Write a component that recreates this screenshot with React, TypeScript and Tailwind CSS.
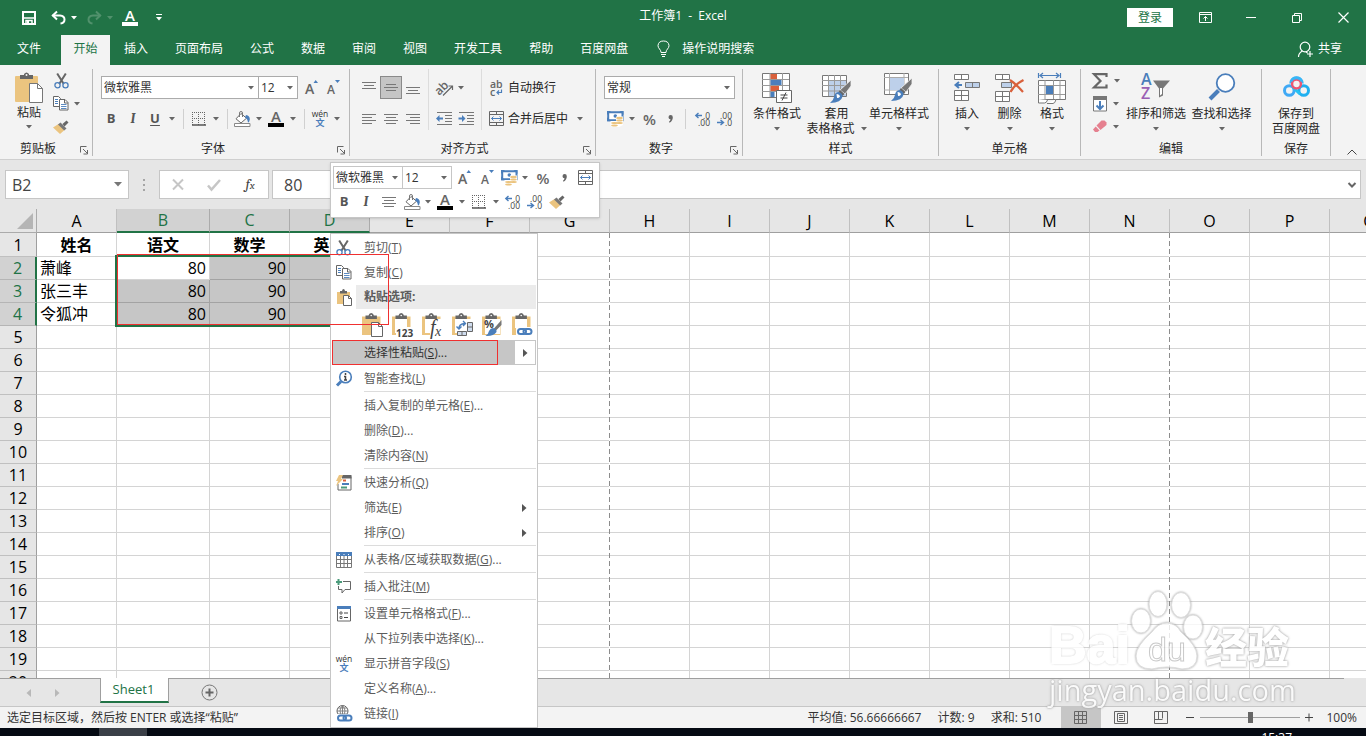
import React from "react";

type Kids = { children?: React.ReactNode };

/* ---------- small drawing helpers ---------- */

function Pic({ w, h, children }: { w: number; h: number } & Kids) {
  return (
    <svg width={w} height={h} viewBox={`0 0 ${w} ${h}`} fill="none" className="block shrink-0 overflow-visible" aria-hidden="true">
      {children}
    </svg>
  );
}

function Caret({ color = "#666" }: { color?: string }) {
  return (
    <Pic w={6} h={4}>
      <path d="M0 0h6L3 3.5z" fill={color} />
    </Pic>
  );
}

const Scissors = () => (
  <Pic w={15} h={16}>
    <path d="M3.2 0.5 9.8 11M11.8 0.5 5.2 11" stroke="#666" strokeWidth="2" />
    <circle cx="3.5" cy="12.2" r="2.6" stroke="#4a7ebb" strokeWidth="1.3" />
    <circle cx="11.5" cy="12.2" r="2.6" stroke="#4a7ebb" strokeWidth="1.3" />
  </Pic>
);

const Copy = () => (
  <Pic w={16} h={15}>
    <path d="M.5.5h5l2 2v8h-7z" fill="#fff" stroke="#666" />
    <path d="M2 3.5h3M2 5.5h3M2 7.5h3" stroke="#4a7ebb" />
    <path d="M6.500 3.500h5.500l3 3v7.500h-8.500z" fill="#fff" stroke="#666" />
    <path d="M11.500 3.500v3.500h3.500" stroke="#666" />
    <path d="M8 8.500h5.500M8 10.500h5.500M8 12.500h5.500" stroke="#4a7ebb" strokeWidth=".9" />
  </Pic>
);

const Brush = () => (
  <Pic w={16} h={14}>
    <path d="M0 7.500 5.500 4l6 6L7 14z" fill="#ebc47f" />
    <path d="M5 4.500 7.500 2.500l6 6-2.300 2z" fill="#777" />
    <path d="M9.500 4 13.500.500l2 2-4 4z" fill="#666" />
  </Pic>
);

const PasteBig = () => (
  <Pic w={30} h={31}>
    <rect x="1" y="4" width="23" height="26" rx="1" fill="#ebc47f" />
    <path d="M6 3h4V2q2.500-3 5 0v1h4v4H6z" fill="#666" />
    <circle cx="12.500" cy="3" r="1" fill="#f3f3f3" />
    <path d="M15.500 11.500h8l5 5v14h-13z" fill="#fff" stroke="#777" />
    <path d="M23.500 11.500v5h5" stroke="#777" />
  </Pic>
);

function Clip({ children }: Kids) {
  return (
    <Pic w={23} h={24}>
      <path d="M1 3.500h18.500V22H1z" fill="#ebc47f" />
      <path d="M4.500 2.500h3q.500-2.500 2.700-2.500t2.700 2.500h3V6H4.500z" fill="#666" />
      <circle cx="10.200" cy="2.500" r=".8" fill="#fff" />
      {children}
    </Pic>
  );
}

const PasteSmall = () => (
  <Pic w={16} h={17}>
    <path d="M1 3h13v12H1z" fill="#ebc47f" />
    <path d="M4 2h2q.300-2 1.500-2t1.500 2h2v2.500H4z" fill="#666" />
    <path d="M7.500 6.500h5l3 3v7h-8z" fill="#fff" stroke="#666" />
    <path d="M12.500 6.500v3h3" stroke="#666" />
  </Pic>
);

const GrowA = () => (
  <Pic w={13} h={15}>
    <text x="0" y="14" fontSize="14" fontWeight="600" fontFamily="Open Sans" fill="#666">A</text>
    <path d="M8.500 3h4.500L10.700 0z" fill="#4a7ebb" />
  </Pic>
);

const ShrinkA = () => (
  <Pic w={13} h={15}>
    <text x="0" y="14" fontSize="12" fontWeight="600" fontFamily="Open Sans" fill="#666">A</text>
    <path d="M8 0h5L10.500 3z" fill="#4a7ebb" />
  </Pic>
);

const BordersIcon = () => (
  <Pic w={14} h={14}>
    <path d="M0 .500h14M0 6.500h14M.500 0v13M6.500 0v13M12.500 0v13" stroke="#666" strokeDasharray="1 1" />
    <path d="M0 13h14" stroke="#555" strokeWidth="1.500" />
  </Pic>
);

const Bucket = () => (
  <Pic w={17} h={16}>
    <path d="M7 2.500 2 7.800 7 12l5.500-4.800z" fill="#fff" stroke="#666" />
    <path d="M5.500 6V2q0-1.500 1.500-1.500T8.500 2v4" stroke="#777" />
    <path d="M12 4q4 .500 3.800 4.500-.300 2.500-1.800 3-.500-4-3-5z" fill="#4a7ebb" />
    <path d="M.500 12.500h15.500v3H.500z" fill="#fff" stroke="#888" />
  </Pic>
);

const FontColor = ({ fg = "#666", bar = "#000" }: { fg?: string; bar?: string }) => (
  <Pic w={16} h={16}>
    <text x="8" y="11" textAnchor="middle" fontSize="15" fontWeight="600" fontFamily="Open Sans" fill={fg}>A</text>
    <path d="M0 12h16v4H0z" fill={bar} />
  </Pic>
);

const Pinyin = () => (
  <Pic w={16} h={17}>
    <text x="8" y="6.500" textAnchor="middle" fontSize="8.500" fontFamily="Open Sans" fill="#333">wén</text>
    <text x="8" y="16" textAnchor="middle" fontSize="9" fontWeight="700" fontFamily="Noto Sans CJK SC" fill="#4a7ebb">文</text>
  </Pic>
);

function Lines({ d }: { d: string }) {
  return (
    <Pic w={14} h={12}>
      <path d={d} stroke="#777" />
    </Pic>
  );
}
const alignTop = "M0 .500h14M2 3.500h10M0 6.500h14";
const alignMid = "M2 2.500h10M0 5.500h14M2 8.500h10";
const alignBottom = "M0 5.500h14M2 8.500h10M0 11.500h14";
const alignLeft = "M0 1.500h14M0 4.500h10M0 7.500h14M0 10.500h10";
const alignCenter = "M0 1.500h14M2 4.500h10M0 7.500h14M2 10.500h10";
const alignRight = "M0 1.500h14M4 4.500h10M0 7.500h14M4 10.500h10";

const Orient = () => (
  <Pic w={18} h={16}>
    <text x="-1" y="12" fontSize="12" fontWeight="600" fontFamily="Open Sans" fill="#666" transform="rotate(-45 6 9)">ab</text>
    <path d="M7 15.500 16 6.500M12.500 6h4v4" stroke="#666" strokeWidth="1.200" />
  </Pic>
);

const Indent = ({ out }: { out?: boolean }) => (
  <Pic w={17} h={13}>
    <path d="M1 .500h15M9 3.500h7M9 6.500h7M9 9.500h7M1 12.500h15" stroke="#777" />
    {out ? (
      <path d="M0 6.500 3.500 3v2.500H7v2H3.500V10z" fill="#4a7ebb" />
    ) : (
      <path d="M7.500 6.500 4 3v2.500H.500v2H4V10z" fill="#4a7ebb" />
    )}
  </Pic>
);

const Wrap = () => (
  <Pic w={13} h={16}>
    <text x="0" y="8" fontSize="10.500" fontWeight="600" fontFamily="Open Sans" fill="#666">ab</text>
    <text x="0" y="15.500" fontSize="10.500" fontWeight="600" fontFamily="Open Sans" fill="#666">c</text>
    <path d="M11.500 9.500v3H7M9 10.500l-2 2 2 2" stroke="#4a7ebb" strokeWidth="1.200" />
  </Pic>
);

const Merge = () => (
  <Pic w={16} h={15}>
    <path d="M.500.500h14v14H.500zM0 3.500h15M0 11.500h15M7.500 0v3.500M7.500 11.500v3" stroke="#666" />
    <path d="M2.500 7.500h10M4.500 5.500l-2 2 2 2M10.500 5.500l2 2-2 2" stroke="#4a7ebb" />
  </Pic>
);

const Currency = () => (
  <Pic w={17} h={16}>
    <path d="M1.200 1.200h14.300v8H1.200z" fill="#fff" stroke="#4a7ebb" strokeWidth="2" />
    <path d="M0 0h4L0 4zM16.500 0h-4l4 4zM0 10.200h4l-4-4z" fill="#4a7ebb" />
    <circle cx="8.300" cy="5" r="1.800" fill="#4a7ebb" />
    <path d="M9 5.500h7V14l-4 2H5l-1.500-1.500V10H9z" fill="#fff" />
    <ellipse cx="12.500" cy="7" rx="3.300" ry="1.300" fill="#ebc47f" />
    <ellipse cx="12.500" cy="9.500" rx="3.300" ry="1.100" fill="#ebc47f" />
    <ellipse cx="12.500" cy="12" rx="3.300" ry="1.100" fill="#ebc47f" />
    <ellipse cx="7.500" cy="12" rx="3.300" ry="1.100" fill="#ebc47f" />
    <ellipse cx="7.500" cy="14.500" rx="3.300" ry="1.100" fill="#ebc47f" />
  </Pic>
);

const CommaIcon = () => (
  <Pic w={6} h={8}>
    <path d="M.500 2.200a2.100 2.100 0 1 1 4.300 0Q5 5.500 1.500 7.800l-.500-1Q2.500 5.500 2.500 4.300.500 4.200.500 2.200z" fill="#666" />
  </Pic>
);

const Decimals = ({ less }: { less?: boolean }) => (
  <Pic w={15} h={14}>
    <text x="15" y="6.500" textAnchor="end" fontSize="8.500" fontFamily="Open Sans" fill="#444">{less ? ".00" : ".0"}</text>
    <text x="15" y="13.500" textAnchor="end" fontSize="8.500" fontFamily="Open Sans" fill="#444">{less ? ".0" : ".00"}</text>
    {less ? (
      <path d="M0 10.500h6M3.500 8l3 2.500-3 2.500" stroke="#4a7ebb" strokeWidth="1.400" />
    ) : (
      <path d="M7 3.500H1M3.500 1 .800 3.500 3.500 6" stroke="#4a7ebb" strokeWidth="1.400" />
    )}
  </Pic>
);

const Launcher = () => (
  <Pic w={9} h={9}>
    <path d="M.500 6.500v-6h6M3 3l4.500 4.500M7.500 4v4H3.500" stroke="#666" />
  </Pic>
);

const PaintTip = () => (
  <g>
    <path d="M28 5v6l-6 8-5-4z" fill="#777" stroke="#f3f3f3" strokeWidth=".8" />
    <path d="M17 15l4.500 4-2 2-4-4z" fill="#666" />
    <path d="M15.500 17q4 1 4 4.500-1 6-12.500 6.500 3.500-2.500 4-6 .500-4.500 4.500-5z" fill="#4a7ebb" />
    <path d="M13.500 19q3 0 3.500 2.500-1.500 2-3 1.500z" fill="#fff" />
  </g>
);

const CondFormat = () => (
  <Pic w={31} h={31}>
    <path d="M.500.500h27v24H.500z" fill="#fff" stroke="#777" />
    <path d="M8 0v24M20.500 0v24M0 6.500h27M0 12.500h27M0 18.500h27" stroke="#999" />
    <path d="M8.500 1H15v5H8.500zM8.500 13H17v5H8.500z" fill="#d9603b" />
    <path d="M8.500 7h11v5h-11zM8.500 19h4v5h-4z" fill="#4a7ebb" />
    <path d="M14.500 17.500h15v12h-15z" fill="#fff" stroke="#666" />
    <path d="M18.500 22h7M18.500 25h7M24 19.500l-4 8" stroke="#444" />
  </Pic>
);

const TableStyle = () => (
  <Pic w={30} h={31}>
    <path d="M.500 2.500h24v21H.500z" fill="#fff" stroke="#777" />
    <path d="M7 8h17v15H7z" fill="#bdd0ea" />
    <path d="M6.500 2v21M12.500 2v21M18.500 2v21M0 7.500h24M0 12.500h24M0 18h24" stroke="#999" />
    <g transform="translate(1 2)">
      <PaintTip />
    </g>
  </Pic>
);

const CellStyle = () => (
  <Pic w={30} h={31}>
    <path d="M.500.500h24v21H.500z" fill="#fff" stroke="#777" />
    <path d="M0 4.500h24M0 17h24M5.500 0v21M20 0v21" stroke="#aaa" />
    <path d="M6 5h14v12H6z" fill="#bdd0ea" />
    <PaintTip />
  </Pic>
);

const InsertCells = () => (
  <Pic w={27} h={30}>
    <path d="M.500 1.500h14v5H.500zM7.500 1.500v5M.500 17.500h14v10H.500zM7.500 17.500v10M.500 22.500h14" fill="#fff" stroke="#777" />
    <path d="M11.500 9.500h14v5h-14zM18.500 9.500v5" fill="#bdd0ea" stroke="#777" />
    <path d="M8 12H2M5 9l-3.500 3L5 15" stroke="#4a7ebb" strokeWidth="2" />
  </Pic>
);

const DeleteCells = () => (
  <Pic w={30} h={30}>
    <path d="M.500 1.500h14v5H.500zM7.500 1.500v5M.500 18.500h14v10H.500zM7.500 18.500v10M.500 23.500h14" fill="#fff" stroke="#777" />
    <path d="M6.500 9.500h10v5h-10z" fill="#bdd0ea" stroke="#777" />
    <path d="M15 7q6 4 13 12M28.500 7Q19 12 15.500 19" stroke="#d9603b" strokeWidth="2.200" />
  </Pic>
);

const FormatCells = () => (
  <Pic w={29} h={32}>
    <path d="M.500 0v5M22.500 0v5M2 2.500h19M5 0 2 2.500 5 5M18 0l3 2.500L18 5" stroke="#4a7ebb" strokeWidth="1.200" />
    <path d="M.500 7.500h27v19H.500z" fill="#fff" stroke="#777" />
    <path d="M7 7v19M15.500 7v19M22 7v19M0 12.500h27M0 21.500h27" stroke="#999" />
    <path d="M8 13h7v8H8z" fill="#4a7ebb" />
    <path d="M.500 26v4h6q2 0 3-3M9 30.500h6q2 0 3-4" fill="#fff" stroke="#777" />
  </Pic>
);

const Sigma = () => (
  <Pic w={16} h={16}>
    <path d="M14.500 4V1.200H2L8.500 8 2 14.500h12.500V11.500" stroke="#666" strokeWidth="2.200" />
  </Pic>
);

const FillDown = () => (
  <Pic w={14} h={16}>
    <path d="M.500 1v14h13V1" fill="#fff" stroke="#777" />
    <path d="M0 0h14v4H0z" fill="#777" />
    <path d="M7 5v8M3.500 9.500 7 13l3.500-3.500" stroke="#4a7ebb" strokeWidth="2" />
  </Pic>
);

const Eraser = () => (
  <Pic w={14} h={13}>
    <path d="M8.500.500h3l2 2v2.500L7.500 10 3.500 5.500z" fill="#e5808f" />
    <path d="M2.700 6.500 6.500 10.500 4.500 12H2L0 9.500z" fill="#e5808f" />
  </Pic>
);

const SortFilter = () => (
  <Pic w={30} h={28}>
    <text x="0" y="12" fontSize="16" fontWeight="600" fontFamily="Open Sans" fill="#4a7ebb">A</text>
    <text x="0" y="26" fontSize="16" fontWeight="600" fontFamily="Open Sans" fill="#9a5fb4">Z</text>
    <path d="M12 7.500h17l-7 8v7l-4 2v-9z" fill="#777" />
    <path d="M19 15h2v6l-2 1.500z" fill="#fff" />
  </Pic>
);

const FindIcon = () => (
  <Pic w={28} h={28}>
    <path d="M2 26 10.500 17.500" stroke="#4a7ebb" strokeWidth="4" />
    <circle cx="17.500" cy="10" r="8.800" fill="#fff" stroke="#4a7ebb" strokeWidth="1.800" />
  </Pic>
);

const NetDisk = () => (
  <Pic w={27} h={22}>
    <circle cx="6.300" cy="14.500" r="4.800" stroke="#3fa9f5" strokeWidth="3" />
    <circle cx="20.700" cy="14.500" r="4.800" stroke="#1fb0f0" strokeWidth="3" />
    <path d="M10 11.500l7 6.500" stroke="#27c1f2" strokeWidth="3" />
    <path d="M7.800 7.500a5.700 5.700 0 0 1 11.400 0" stroke="#38b6f7" strokeWidth="3" />
    <circle cx="13.500" cy="8" r="4.400" stroke="#f0566f" strokeWidth="2.400" />
    <path d="M8 5.500a6 6 0 0 1 11 0" stroke="#38b6f7" strokeWidth="2.600" />
  </Pic>
);

/* ---------- controls ---------- */

function Tool({ w, label, children, on }: { w: string; label: string; on?: boolean } & Kids) {
  return (
    <button
      aria-label={label}
      className={`${w} flex h-[23px] shrink-0 items-center justify-center ${on ? "border border-[#8a8a8a] bg-[#c5c5c5]" : ""}`}
    >
      {children}
    </button>
  );
}

const Rule = ({ m }: { m: string }) => <span className={`${m} h-5 w-px shrink-0 bg-[#d0d0d0]`} />;

function Combo({ label, value, w, border }: { label: string; value: string; w: string; border: string }) {
  return (
    <label className={`${w} ${border} relative block h-[23px] shrink-0 border bg-white`}>
      <span className="sr-only">{label}</span>
      <select defaultValue={value} className="block h-[21px] w-full appearance-none bg-transparent pl-[2px] text-xs leading-normal text-[#333] outline-none">
        <option>{value}</option>
      </select>
      <span className="pointer-events-none absolute top-[9px] right-1">
        <Caret />
      </span>
    </label>
  );
}

function Group({ w, name, launcher, children }: { w: string; name: string; launcher?: boolean } & Kids) {
  return (
    <section className={`${w} flex h-[87px] shrink-0 flex-col border-r border-[#b8b8b8]`} aria-label={name}>
      <div className="flex-1">{children}</div>
      <div className="flex h-[15px] items-center leading-4">
        <span className="flex-1 text-center">{name}</span>
        {launcher && (
          <span className="w-4 pt-1 pl-1">
            <Launcher />
          </span>
        )}
      </div>
    </section>
  );
}

function Big({ w, icon, lines, arrow }: { w: string; icon: React.ReactNode; lines: string[]; arrow?: boolean }) {
  return (
    <button className={`${w} flex shrink-0 flex-col items-center pt-1`}>
      <span className="flex h-8 items-start justify-center">{icon}</span>
      <span className="leading-[17px] whitespace-nowrap">{lines[0]}</span>
      <span className="flex h-[14px] items-center gap-1.5 whitespace-nowrap leading-[14px]">
        {lines[1] && <span>{lines[1]}</span>}
        {arrow && <Caret />}
      </span>
    </button>
  );
}

function Quick({ w, label, children }: { w: string; label: string } & Kids) {
  return (
    <button aria-label={label} className={`${w} flex h-full shrink-0 items-center justify-center`}>
      {children}
    </button>
  );
}

/* ---------- title bar and tabs ---------- */

function TitleBar() {
  return (
    <header className="grid h-[35px] shrink-0 grid-cols-[1fr_auto_1fr] items-center text-white">
      <div className="flex h-8 items-center pl-[22px]">
        <Quick w="w-[14px]" label="保存">
          <Pic w={14} h={14}>
            <path d="M1 1h12v12H1z" stroke="#fff" strokeWidth="2" />
            <path d="M2 7h10M4 9.500h6V13H4z" stroke="#fff" strokeWidth="1.500" />
            <path d="M5 10h2v3H5z" fill="#fff" />
          </Pic>
        </Quick>
        <Quick w="ml-[15px] mr-[5px] w-[15px]" label="撤消">
          <Pic w={15} h={13}>
            <path d="M1.500 4.500H9q4.500.500 4.500 4t-4 4" stroke="#fff" strokeWidth="2" />
            <path d="M6 .500 1.800 4.500 6 8.500" stroke="#fff" strokeWidth="2" />
          </Pic>
        </Quick>
        <Caret color="#fff" />
        <Quick w="ml-[10px] mr-[5px] w-[15px]" label="恢复">
          <Pic w={15} h={13}>
            <path d="M13.500 4.500H6Q1.500 5 1.500 8.500t4 4" stroke="#51916c" strokeWidth="2" />
            <path d="M9 .500 13.200 4.500 9 8.500" stroke="#51916c" strokeWidth="2" />
          </Pic>
        </Quick>
        <Caret color="#51916c" />
        <Quick w="mx-[9px] w-4" label="字体颜色">
          <FontColor fg="#fff" bar="#fff" />
        </Quick>
        <Quick w="w-6" label="自定义快速访问工具栏">
          <Pic w={6} h={7}>
            <path d="M0 .500h6" stroke="#fff" />
            <path d="M0 3h6L3 6.500z" fill="#fff" />
          </Pic>
        </Quick>
      </div>
      <h1 className="pb-1 whitespace-pre leading-5">{"工作簿1  -  Excel"}</h1>
      <div className="flex h-8 items-center justify-end">
        <button className="mr-[9px] h-[19px] w-[46px] bg-white text-[#217346]">登录</button>
        <Quick w="w-[46px]" label="功能区显示选项">
          <Pic w={13} h={11}>
            <path d="M.500.500h12v10H.500zM0 2.500h13M6.500 9V4.500M4.500 6.500l2-2 2 2" stroke="#fff" />
          </Pic>
        </Quick>
        <Quick w="w-[46px]" label="最小化">
          <span className="h-px w-[10px] bg-white" />
        </Quick>
        <Quick w="w-[46px]" label="向下还原">
          <Pic w={10} h={10}>
            <path d="M.500 2.500h7v7h-7zM2.500 2.500v-2h7v7h-2" stroke="#fff" />
          </Pic>
        </Quick>
        <Quick w="w-[46px]" label="关闭">
          <Pic w={11} h={11}>
            <path d="M.500.500l10 10M10.500.500l-10 10" stroke="#fff" strokeWidth="1.200" />
          </Pic>
        </Quick>
      </div>
    </header>
  );
}

const tabs = ["插入", "页面布局", "公式", "数据", "审阅", "视图", "开发工具", "帮助", "百度网盘"];

function Tabs() {
  return (
    <nav className="flex h-[30px] shrink-0 items-stretch gap-px pb-0.5 text-white">
      <button className="mr-[6px] ml-1 px-[13px]">文件</button>
      <button className="-mb-0.5 w-[49px] bg-[#f3f3f3] pb-0.5 text-[#217346]">开始</button>
      {tabs.map((t) => (
        <button key={t} className="px-[13px]">
          {t}
        </button>
      ))}
      <button className="flex items-center gap-3 px-[15px]">
        <Pic w={13} h={18}>
          <path d="M4 12.500q0-2-1.500-3.500Q1 7.500 1 5.500 1.500 1 6.500 1T12 5.500q0 2-1.500 3.500T9 12.500zM4 14.500h5M5 16.500h3" stroke="#fff" />
        </Pic>
        操作说明搜索
      </button>
      <button className="mr-6 ml-auto flex items-center gap-1">
        <Pic w={16} h={17}>
          <circle cx="7" cy="6" r="4.800" stroke="#fff" strokeWidth="1.200" />
          <path d="M.500 16q0-4 4-6M8 11l1.500 1M12 10v6M9 13h6" stroke="#fff" strokeWidth="1.200" />
        </Pic>
        共享
      </button>
    </nav>
  );
}

/* ---------- ribbon ---------- */

function Ribbon() {
  return (
    <div className="flex h-[95px] shrink-0 border-b border-[#cfcfcf] bg-[#f3f3f3] pt-1 text-[#262626]">
      <Group w="w-[93px]" name="剪贴板" launcher>
        <div className="flex pl-[15px]">
          <button className="flex w-7 flex-col items-center pt-[3px]">
            <PasteBig />
            <span className="pt-px leading-[17px]">粘贴</span>
            <span className="flex h-3 items-center">
              <Caret />
            </span>
          </button>
          <div className="flex flex-col pl-[9px]">
            <Tool w="w-[18px]" label="剪切">
              <Scissors />
            </Tool>
            <div className="flex items-center gap-1">
              <Tool w="w-[18px]" label="复制">
                <Copy />
              </Tool>
              <Caret />
            </div>
            <Tool w="w-[18px]" label="格式刷">
              <Brush />
            </Tool>
          </div>
        </div>
      </Group>

      <Group w="w-[257px]" name="字体" launcher>
        <div className="flex pt-[7px] pl-2">
          <Combo label="字体" value="微软雅黑" w="w-[158px]" border="border-[#ababab]" />
          <Combo label="字号" value="12" w="-ml-px w-[40px]" border="border-[#ababab]" />
          <Tool w="ml-0.5 w-[22px]" label="增大字号">
            <GrowA />
          </Tool>
          <Tool w="w-[22px]" label="减小字号">
            <ShrinkA />
          </Tool>
        </div>
        <div className="flex items-center pt-2 pl-[7px]">
          <Tool w="w-[22px]" label="加粗">
            <b className="text-[13px] text-[#555]">B</b>
          </Tool>
          <Tool w="w-[22px]" label="倾斜">
            <i className="font-serif text-sm font-bold text-[#555]">I</i>
          </Tool>
          <Tool w="w-[22px]" label="下划线">
            <b className="text-[13px] text-[#555] underline underline-offset-2">U</b>
          </Tool>
          <Tool w="w-3" label="下划线选项">
            <Caret />
          </Tool>
          <Rule m="mx-[5px]" />
          <Tool w="w-5" label="边框">
            <BordersIcon />
          </Tool>
          <Tool w="w-[14px]" label="边框选项">
            <Caret />
          </Tool>
          <Rule m="mx-1" />
          <Tool w="w-5" label="填充颜色">
            <Bucket />
          </Tool>
          <Tool w="w-[14px]" label="填充选项">
            <Caret />
          </Tool>
          <Tool w="w-5" label="字体颜色">
            <FontColor />
          </Tool>
          <Tool w="w-[14px]" label="颜色选项">
            <Caret />
          </Tool>
          <Rule m="mx-1" />
          <Tool w="w-[22px]" label="拼音">
            <Pinyin />
          </Tool>
          <Tool w="w-3" label="拼音选项">
            <Caret />
          </Tool>
        </div>
      </Group>

      <Group w="w-[246px]" name="对齐方式" launcher>
        <div className="flex pl-2">
          <div className="w-[70px] pt-[7px]">
            <div className="flex h-[23px]">
              <Tool w="w-[22px]" label="顶端对齐">
                <Lines d={alignTop} />
              </Tool>
              <Tool w="w-[22px]" label="垂直居中" on>
                <Lines d={alignMid} />
              </Tool>
              <Tool w="w-[22px]" label="底端对齐">
                <Lines d={alignBottom} />
              </Tool>
            </div>
            <div className="flex pt-2">
              <Tool w="w-[22px]" label="左对齐">
                <Lines d={alignLeft} />
              </Tool>
              <Tool w="w-[22px]" label="居中">
                <Lines d={alignCenter} />
              </Tool>
              <Tool w="w-[22px]" label="右对齐">
                <Lines d={alignRight} />
              </Tool>
            </div>
          </div>
          <div className="flex w-[54px] flex-col gap-2 border-x border-[#dcdcdc] pt-[7px]">
            <div className="flex pl-[5px]">
              <Tool w="w-[21px]" label="方向">
                <Orient />
              </Tool>
              <Tool w="w-3" label="方向选项">
                <Caret />
              </Tool>
            </div>
            <div className="flex pl-1">
              <Tool w="w-[22px]" label="减少缩进量">
                <Indent out />
              </Tool>
              <Tool w="w-[22px]" label="增加缩进量">
                <Indent />
              </Tool>
            </div>
          </div>
          <div className="flex flex-col gap-2 pt-[7px] pl-[7px]">
            <button className="flex h-[23px] items-center">
              <span className="flex w-[19px] pl-px">
                <Wrap />
              </span>
              自动换行
            </button>
            <button className="flex h-[23px] items-center">
              <span className="flex w-[19px]">
                <Merge />
              </span>
              合并后居中
              <span className="pl-[9px]">
                <Caret />
              </span>
            </button>
          </div>
        </div>
      </Group>

      <Group w="w-[147px]" name="数字" launcher>
        <div className="flex pt-[7px] pl-2">
          <Combo label="数字格式" value="常规" w="w-[131px]" border="border-[#ababab]" />
        </div>
        <div className="flex items-center pt-2 pl-2">
          <Tool w="w-[22px]" label="会计数字格式">
            <Currency />
          </Tool>
          <Tool w="w-3" label="货币选项">
            <Caret />
          </Tool>
          <Tool w="w-[23px]" label="百分比样式">
            <span className="text-[15px] font-semibold text-[#666]">%</span>
          </Tool>
          <Tool w="w-[19px]" label="千位分隔样式">
            <CommaIcon />
          </Tool>
          <Rule m="mx-[5px]" />
          <Tool w="w-[22px]" label="增加小数位数">
            <Decimals />
          </Tool>
          <Tool w="w-[22px]" label="减少小数位数">
            <Decimals less />
          </Tool>
        </div>
      </Group>

      <Group w="w-[196px]" name="样式">
        <div className="flex pl-1">
          <Big w="w-[60px]" icon={<CondFormat />} lines={["条件格式"]} arrow />
          <Big w="w-[59px]" icon={<TableStyle />} lines={["套用", "表格格式"]} arrow />
          <Big w="w-[66px]" icon={<CellStyle />} lines={["单元格样式"]} arrow />
        </div>
      </Group>

      <Group w="w-[142px]" name="单元格">
        <div className="flex pl-[7px]">
          <Big w="w-[42px]" icon={<InsertCells />} lines={["插入"]} arrow />
          <Big w="w-[43px]" icon={<DeleteCells />} lines={["删除"]} arrow />
          <Big w="w-[42px]" icon={<FormatCells />} lines={["格式"]} arrow />
        </div>
      </Group>

      <Group w="w-[181px]" name="编辑">
        <div className="flex pl-2">
          <div className="flex w-[34px] flex-col">
            <div className="flex items-center gap-[3px]">
              <Tool w="w-[22px]" label="自动求和">
                <Sigma />
              </Tool>
              <Caret />
            </div>
            <div className="flex items-center gap-0.5">
              <Tool w="w-[22px]" label="填充">
                <FillDown />
              </Tool>
              <Caret />
            </div>
            <div className="flex items-center gap-0.5">
              <Tool w="w-[22px]" label="清除">
                <Eraser />
              </Tool>
              <Caret />
            </div>
          </div>
          <Big w="w-[66px]" icon={<SortFilter />} lines={["排序和筛选"]} arrow />
          <Big w="w-[65px]" icon={<FindIcon />} lines={["查找和选择"]} arrow />
        </div>
      </Group>

      <Group w="w-[69px]" name="保存">
        <Big
          w="w-full"
          icon={
            <span className="pt-[3px]">
              <NetDisk />
            </span>
          }
          lines={["保存到", "百度网盘"]}
        />
      </Group>

      <button aria-label="折叠功能区" className="mt-auto mr-[9px] mb-1 ml-auto">
        <Pic w={10} h={6}>
          <path d="M.500 5.500 5 1l4.500 4.500" stroke="#444" />
        </Pic>
      </button>
    </div>
  );
}

/* ---------- formula bar ---------- */

function FormulaBar() {
  return (
    <div className="flex h-[49px] shrink-0 items-center bg-[#e6e6e6] pr-[5px] pl-[5px] text-[#444]">
      <label className="flex h-[29px] w-[124px] items-center border border-[#c6c6c6] bg-white pr-1.5">
        <span className="sr-only">名称框</span>
        <input defaultValue="B2" className="min-w-0 flex-1 bg-transparent pl-1.5 text-base outline-none" />
        <Pic w={8} h={5}>
          <path d="M0 0h8L4 4.500z" fill="#777" />
        </Pic>
      </label>
      <span className="mx-[13px] flex w-1 flex-col items-center gap-[3px]">
        <i className="size-0.5 bg-[#a5a5a5]" />
        <i className="size-0.5 bg-[#a5a5a5]" />
        <i className="size-0.5 bg-[#a5a5a5]" />
      </span>
      <div className="mr-[3px] flex h-[29px] w-[110px] items-center border border-[#c6c6c6] bg-white">
        <Quick w="w-9" label="取消">
          <Pic w={12} h={11}>
            <path d="M1 .500l10 10M11 .500l-10 10" stroke="#c6c6c6" strokeWidth="2" />
          </Pic>
        </Quick>
        <Quick w="w-9" label="输入">
          <Pic w={14} h={12}>
            <path d="M1 6.500 4.500 10.500 13 1" stroke="#c6c6c6" strokeWidth="2.500" />
          </Pic>
        </Quick>
        <Quick w="w-9" label="插入函数">
          <i className="font-serif text-[15px] text-[#444]">
            f<span className="text-[11px]">x</span>
          </i>
        </Quick>
      </div>
      <label className="flex h-[29px] min-w-0 flex-1 items-center border border-[#c6c6c6] bg-white pr-1">
        <span className="sr-only">编辑栏</span>
        <input defaultValue="80" className="min-w-0 flex-1 bg-transparent pl-[11px] text-base outline-none" />
        <Pic w={8} h={6}>
          <path d="M.500 1 4 4.500 7.500 1" stroke="#666" strokeWidth="2" />
        </Pic>
      </label>
    </div>
  );
}

/* ---------- sheet ---------- */

const columns = "ABCDEFGHIJKLMNOPQRSTUVWXYZ".split("");
const rowCount = 40;
const cells: Record<string, string> = {
  A1: "姓名", B1: "语文", C1: "数学", D1: "英语",
  A2: "萧峰", B2: "80", C2: "90", D2: "85",
  A3: "张三丰", B3: "80", C3: "90", D3: "85",
  A4: "令狐冲", B4: "80", C4: "90", D4: "85",
};

function cellClass(c: string, r: number) {
  const chosen = "BCD".includes(c) && r >= 2 && r <= 4;
  const tone =
    chosen && !(c === "B" && r === 2)
      ? "bg-[#c6c6c6] border-b-[#a3a3a3] border-r-[#a3a3a3]"
      : "border-b-[#d4d4d4] border-r-[#d4d4d4]";
  const align = r === 1 ? "text-center font-bold" : c === "A" ? "pl-[3px] text-left" : "pr-[3px] text-right";
  return `overflow-hidden whitespace-nowrap border-r border-b ${tone} ${align}`;
}

const pageBreak =
  "pointer-events-none absolute top-6 bottom-0 w-px bg-[repeating-linear-gradient(#8c8c8c_0_5px,#fff_5px_8px)]";

function Sheet() {
  return (
    <main className="relative min-h-0 flex-1 overflow-hidden bg-white">
      <table className="w-[2130px] table-fixed border-separate border-spacing-0 text-base leading-[22px] text-black">
        <colgroup>
          <col className="w-[37px]" />
          {columns.map((c) => (
            <col key={c} className={c === "B" ? "w-[93px]" : "w-[80px]"} />
          ))}
        </colgroup>
        <thead>
          <tr className="h-6 bg-[#e6e6e6]">
            <th className="border-r border-b border-[#ababab]">
              <div className="flex justify-end pr-[3px]">
                <Pic w={16} h={16}>
                  <path d="M16 0v16H0z" fill="#b5b5b5" />
                </Pic>
              </div>
            </th>
            {columns.map((c) => (
              <th
                key={c}
                scope="col"
                className={
                  "BCD".includes(c)
                    ? "border-r border-b-2 border-r-[#ababab] border-b-[#217346] bg-[#d2d2d2] font-normal text-[#217346]"
                    : "border-r border-b border-r-[#c0c0c0] border-b-[#9f9f9f] font-normal"
                }
              >
                {c}
              </th>
            ))}
          </tr>
        </thead>
        <tbody>
          {Array.from({ length: rowCount }, (_, i) => i + 1).map((r) => (
            <tr key={r} className={r === 1 ? "h-6" : "h-[23px]"}>
              <th
                scope="row"
                className={
                  r >= 2 && r <= 4
                    ? "border-r-2 border-b border-r-[#217346] border-b-[#b5b5b5] bg-[#d2d2d2] font-normal text-[#217346]"
                    : "border-r border-b border-r-[#9f9f9f] border-b-[#c0c0c0] bg-[#e6e6e6] font-normal"
                }
              >
                {r}
              </th>
              {columns.map((c) => (
                <td key={c} className={cellClass(c, r)}>
                  {cells[c + r]}
                </td>
              ))}
            </tr>
          ))}
        </tbody>
      </table>
      <div className={`${pageBreak} left-[609px]`} />
      <div className={`${pageBreak} left-[1169px]`} />
      <div className="pointer-events-none absolute top-[46px] left-[115px] h-[72px] w-[256px] border-2 border-[#217346]" />
    </main>
  );
}

/* ---------- bottom bars ---------- */

function SheetTabs() {
  return (
    <div className="flex h-[29px] shrink-0 items-start border-b border-[#c6c6c6] bg-[#e6e6e6]">
      <div className="flex h-7 w-[100px] items-center border-t border-[#9f9f9f] pl-[26px]">
        <button aria-label="上一张" className="mr-6">
          <Pic w={5} h={8}>
            <path d="M5 0v8L.500 4z" fill="#b8b8b8" />
          </Pic>
        </button>
        <button aria-label="下一张">
          <Pic w={5} h={8}>
            <path d="M0 0v8l4.500-4z" fill="#b8b8b8" />
          </Pic>
        </button>
      </div>
      <button className="h-[25px] w-[69px] border-x border-b-2 border-x-[#9f9f9f] border-b-[#217346] bg-white pr-0.5 text-[13px] text-[#217346]">
        Sheet1
      </button>
      <div className="mr-[22px] flex h-7 flex-1 items-center border-t border-[#9f9f9f] pl-8">
        <button aria-label="新工作表">
          <Pic w={17} h={17}>
            <circle cx="8.500" cy="8.500" r="7.500" stroke="#777" />
            <path d="M8.500 4.500v8M4.500 8.500h8" stroke="#666" strokeWidth="2" />
          </Pic>
        </button>
      </div>
    </div>
  );
}

function StatusBar() {
  return (
    <footer className="flex h-[21px] shrink-0 items-center bg-[#f3f3f3] pr-[9px] text-[#333]">
      <span className="mr-auto pl-[7px]">选定目标区域，然后按 ENTER 或选择“粘贴”</span>
      <span>平均值: 56.66666667</span>
      <span className="ml-4">计数: 9</span>
      <span className="mr-5 ml-4">求和: 510</span>
      <button aria-label="普通" className="flex h-full w-10 items-center justify-center bg-[#c6c6c6]">
        <Pic w={14} h={14}>
          <path d="M.500.500h12v12H.500zM4.500 0v13M8.500 0v13M0 4.500h13M0 8.500h13" stroke="#666" />
        </Pic>
      </button>
      <button aria-label="页面布局" className="flex h-full w-10 items-center justify-center">
        <Pic w={14} h={14}>
          <path d="M.500.500h13v12H.500zM3.500 2.500h7v8h-7zM5 4.500h4M5 6.500h4M5 8.500h4" stroke="#666" />
        </Pic>
      </button>
      <button aria-label="分页预览" className="flex h-full w-10 items-center justify-center">
        <Pic w={14} h={14}>
          <path d="M.500.500h13v12H.500zM4.500 0v8M8.500 0v7.500M0 8.500h8.500" stroke="#666" />
        </Pic>
      </button>
      <button aria-label="缩小" className="mr-[6px] ml-[5px] h-full">
        <Pic w={8} h={9}>
          <path d="M0 4.500h8" stroke="#444" />
        </Pic>
      </button>
      <input
        type="range"
        aria-label="显示比例"
        defaultValue={50}
        className="h-3 w-[100px] appearance-none bg-transparent bg-[linear-gradient(#a0a0a0,#a0a0a0)] bg-size-[100%_1px] bg-center bg-no-repeat [&::-webkit-slider-thumb]:h-[11px] [&::-webkit-slider-thumb]:w-[5px] [&::-webkit-slider-thumb]:appearance-none [&::-webkit-slider-thumb]:bg-[#666]"
      />
      <button aria-label="放大" className="ml-[5px] h-full">
        <Pic w={8} h={9}>
          <path d="M0 4.500h8M4 .500v8" stroke="#444" />
        </Pic>
      </button>
      <span className="ml-[13px]">100%</span>
    </footer>
  );
}

function Taskbar() {
  return (
    <div className="flex h-2 shrink-0 overflow-hidden bg-[#050a13] pl-[99px] text-white">
      <span className="w-12 bg-[#3a3f47]" />
      <span className="mr-[74px] ml-auto pt-0.5 leading-4">15:37</span>
    </div>
  );
}

/* ---------- floating layers ---------- */

function MiniBar() {
  return (
    <div role="toolbar" className="absolute top-[162px] left-[330px] h-[56px] w-[270px] border border-[#c6c6c6] bg-white pt-[3px] pl-[2px] shadow-sm">
      <div className="flex items-center">
        <Combo label="浮动字体" value="微软雅黑" w="w-[70px]" border="border-[#c6c6c6]" />
        <Combo label="浮动字号" value="12" w="-ml-px w-[50px]" border="border-[#c6c6c6]" />
        <Tool w="w-6" label="增大字号">
          <GrowA />
        </Tool>
        <Tool w="w-[22px]" label="减小字号">
          <ShrinkA />
        </Tool>
        <Tool w="w-[22px]" label="会计数字格式">
          <Currency />
        </Tool>
        <Tool w="w-2.5" label="货币选项">
          <Caret />
        </Tool>
        <Tool w="w-[26px]" label="百分比样式">
          <span className="text-[15px] font-semibold text-[#666]">%</span>
        </Tool>
        <Tool w="w-[18px]" label="千位分隔样式">
          <CommaIcon />
        </Tool>
        <Tool w="w-6" label="合并后居中">
          <Merge />
        </Tool>
      </div>
      <div className="flex items-center pt-px">
        <Tool w="w-[22px]" label="加粗">
          <b className="text-[13px] text-[#555]">B</b>
        </Tool>
        <Tool w="w-[22px]" label="倾斜">
          <i className="font-serif text-sm font-bold text-[#555]">I</i>
        </Tool>
        <Tool w="w-6" label="居中">
          <Lines d={alignCenter} />
        </Tool>
        <Tool w="w-[22px]" label="填充颜色">
          <Bucket />
        </Tool>
        <Tool w="w-2.5" label="填充选项">
          <Caret />
        </Tool>
        <Tool w="w-6" label="字体颜色">
          <FontColor />
        </Tool>
        <Tool w="w-2.5" label="颜色选项">
          <Caret />
        </Tool>
        <Tool w="w-6" label="边框">
          <BordersIcon />
        </Tool>
        <Tool w="w-2.5" label="边框选项">
          <Caret />
        </Tool>
        <Tool w="w-[22px]" label="增加小数位数">
          <Decimals />
        </Tool>
        <Tool w="w-[22px]" label="减少小数位数">
          <Decimals less />
        </Tool>
        <Tool w="w-6" label="格式刷">
          <Brush />
        </Tool>
      </div>
    </div>
  );
}

function Item({ icon, text, hot, tail = "", more }: { icon?: React.ReactNode; text: string; hot: string; tail?: string; more?: boolean }) {
  return (
    <button role="menuitem" className="flex h-[25px] w-full items-center text-left">
      <span className="flex w-[33px] pl-[5px]">{icon}</span>
      <span className="flex-1">
        {text}(<u>{hot}</u>){tail}
      </span>
      {more && (
        <span className="pr-2.5">
          <Pic w={5} h={8}>
            <path d="M0 0v8l4.500-4z" fill="#555" />
          </Pic>
        </span>
      )}
    </button>
  );
}

const Divider = () => <div className="mr-px mb-px ml-[33px] h-px bg-[#dcdcdc]" />;

const LinkMark = () => (
  <g stroke="#4a7ebb" strokeWidth="2">
    <rect x="1" y="1" width="8" height="5" rx="2.500" />
    <rect x="6.500" y="1" width="8" height="5" rx="2.500" />
  </g>
);

function PasteOptions() {
  const options: [string, React.ReactNode][] = [
    [
      "粘贴",
      <g key="p" stroke="#666">
        <path d="M10.500 9.500h7l4 4v10h-11z" fill="#fff" />
        <path d="M17.500 9.500v4h4" />
      </g>,
    ],
    [
      "值",
      <g key="v">
        <path d="M4 6h12v14H4z" fill="#fff" />
        <path d="M5 14h16v9H5z" fill="#fff" />
        <text x="5" y="23.500" fontSize="10" fontWeight="700" fontFamily="Open Sans" fill="#444">123</text>
      </g>,
    ],
    [
      "公式",
      <g key="f">
        <path d="M4 6h17v18H9V20H4z" fill="#fff" />
        <text x="9" y="21" fontSize="20" fontStyle="italic" fontFamily="Liberation Serif" fill="#444">f</text>
        <text x="14" y="23" fontSize="14" fontStyle="italic" fontFamily="Liberation Serif" fill="#444">x</text>
      </g>,
    ],
    [
      "转置",
      <g key="t">
        <path d="M4 6h17v18H7V20H4z" fill="#fff" />
        <path d="M16.500 9.500h5v9h-5zM16.500 14h5M6.500 18.500h9v4h-9zM11 18.500v4" fill="#cfdcee" stroke="#666" />
        <path d="M8 16q-.500-5 6-5.500M12 8l2.500 2.500L12 13M5.500 13.500 8 16l2.500-2.500" stroke="#4a7ebb" strokeWidth="1.400" />
      </g>,
    ],
    [
      "格式",
      <g key="s">
        <path d="M4 6h15v15H4z" fill="#fff" />
        <text x="3" y="15" fontSize="11" fontWeight="700" fontFamily="Open Sans" fill="#444">%</text>
        <path d="M20.500 7v5l-6 6-2-2z" fill="#777" />
        <path d="M12 15q4 1 3.500 4-3 4.500-11 4 3-2 3.500-5 1.500-3 4-3z" fill="#4a7ebb" />
      </g>,
    ],
    [
      "链接",
      <g key="l">
        <path d="M4 6h12v9H4z" fill="#fff" />
        <path d="M5 14h17v9H5z" fill="#fff" />
        <g transform="translate(6 15)">
          <LinkMark />
        </g>
      </g>,
    ],
  ];
  return (
    <div className="flex h-[31px] items-start gap-[7px] pt-1 pl-[30px]">
      {options.map(([name, art]) => (
        <button key={name} aria-label={name}>
          <Clip>{art}</Clip>
        </button>
      ))}
    </div>
  );
}

function ContextMenu() {
  return (
    <div role="menu" className="absolute top-[233px] left-[330px] w-[208px] border border-[#c6c6c6] bg-white pt-px pb-px text-[#5c5c5c]">
      <Item icon={<Scissors />} text="剪切" hot="T" />
      <Item icon={<Copy />} text="复制" hot="C" />
      <div className="flex h-6 items-center pr-px">
        <span className="flex w-[25px] pl-[5px]">
          <PasteSmall />
        </span>
        <span className="h-full flex-1 bg-[#ebebeb] pl-2 leading-6 font-bold">粘贴选项:</span>
      </div>
      <PasteOptions />
      <div className="mx-px mb-px flex h-[25px] bg-[#c6c6c6] text-[#333]">
        <button role="menuitem" className="flex-1 pl-8 text-left">
          选择性粘贴(<u>S</u>)...
        </button>
        <button aria-label="展开选择性粘贴" className="flex w-[22px] items-center justify-center border border-[#c6c6c6] bg-white">
          <Pic w={5} h={8}>
            <path d="M0 0v8l4.500-4z" fill="#555" />
          </Pic>
        </button>
      </div>
      <Item
        icon={
          <Pic w={17} h={17}>
            <path d="M1 15.500 5 11.500" stroke="#4a7ebb" strokeWidth="3" />
            <circle cx="9.500" cy="7" r="5.800" fill="#fff" stroke="#4a7ebb" strokeWidth="1.600" />
            <path d="M9.500 3v2M8 6.500h1.500V10M8 10h3" stroke="#444" strokeWidth="1.500" />
          </Pic>
        }
        text="智能查找"
        hot="L"
      />
      <Divider />
      <Item text="插入复制的单元格" hot="E" tail="..." />
      <Item text="删除" hot="D" tail="..." />
      <Item text="清除内容" hot="N" />
      <Divider />
      <Item
        icon={
          <Pic w={16} h={16}>
            <path d="M4.500 1.500h10.500v13.500h-13V9" fill="#fff" stroke="#666" />
            <path d="M6 0h9.500v3.500H6z" fill="#666" />
            <path d="M3 0h4L5 4h2L0 11l2-5H0z" fill="#ebc47f" />
            <path d="M7 5.500h3" stroke="#d9603b" strokeWidth="2" />
            <path d="M6 9h7" stroke="#4a7ebb" strokeWidth="2" />
            <path d="M5 12.500h6" stroke="#4b9b7b" strokeWidth="2" />
          </Pic>
        }
        text="快速分析"
        hot="Q"
      />
      <Item text="筛选" hot="E" more />
      <Item text="排序" hot="O" more />
      <Divider />
      <Item
        icon={
          <Pic w={16} h={16}>
            <path d="M.500.500h15v15H.500zM0 7.500h16M0 11.500h16M4.500 3v13M8 3v13M11.500 3v13" fill="#fff" stroke="#777" />
            <path d="M0 0h16v4H0z" fill="#4a7ebb" />
            <path d="M3 2.500h1M7.500 2.500h1M12 2.500h1" stroke="#fff" />
          </Pic>
        }
        text="从表格/区域获取数据"
        hot="G"
        tail="..."
      />
      <Divider />
      <Item
        icon={
          <Pic w={16} h={16}>
            <path d="M7 2.500h7.500v8H9l-3 3.500v-3.500H2.500V7" stroke="#666" />
            <path d="M2.500 0v6M0 3h6" stroke="#4b9b7b" strokeWidth="2" />
          </Pic>
        }
        text="插入批注"
        hot="M"
      />
      <Divider />
      <Item
        icon={
          <Pic w={16} h={16}>
            <path d="M1.500 1.500h13v13.500h-13z" fill="#fff" stroke="#666" />
            <path d="M1 0h14v3H1z" fill="#4a7ebb" />
            <path d="M4 6h2v2H4zM4 10.500h2v2H4z" stroke="#666" />
            <path d="M8 7h4M8 11.500h4" stroke="#444" />
          </Pic>
        }
        text="设置单元格格式"
        hot="F"
        tail="..."
      />
      <Item text="从下拉列表中选择" hot="K" tail="..." />
      <Item icon={<Pinyin />} text="显示拼音字段" hot="S" />
      <Item text="定义名称" hot="A" tail="..." />
      <Item
        icon={
          <Pic w={17} h={17}>
            <circle cx="6.500" cy="6" r="5.500" stroke="#666" />
            <path d="M1 6h11M2 3h9M2 9h9M6.500.500v11M6.500.500q-5 5.500 0 11M6.500.500q5 5.500 0 11" stroke="#777" strokeWidth=".9" />
            <path d="M1 9h16v8H1z" fill="#fff" />
            <g transform="translate(1 9.500)">
              <LinkMark />
            </g>
          </Pic>
        }
        text="链接"
        hot="I"
      />
    </div>
  );
}

function Watermark() {
  const glow = "[text-shadow:0_0_2px_#999,0_0_3px_#aaa]";
  return (
    <div className="pointer-events-none absolute right-[71px] bottom-[28px] w-[246px] text-white opacity-80">
      <div className="flex h-[82px] items-end">
        <span className={`w-[82px] text-[52px] leading-[54px] font-bold [-webkit-text-stroke:2px_#fff] [font-family:'Liberation_Sans',sans-serif] ${glow}`}>
          Bai
        </span>
        <svg width="74" height="82" viewBox="0 0 74 82" className="shrink-0 overflow-visible drop-shadow-[0_0_1px_#888]" aria-hidden="true">
          <g fill="#fff" stroke="#d5d5d5">
            <ellipse cx="27" cy="14" rx="9" ry="12.500" />
            <ellipse cx="50" cy="15" rx="9.500" ry="12.500" />
            <ellipse cx="10" cy="31" rx="9.500" ry="12" />
            <ellipse cx="62" cy="37" rx="9.500" ry="12" />
            <path d="M36 33q9 0 14 9 16 14 16 24 0 13-15 13-8-2-15-2t-15 2Q5 79 5 66q0-10 16-24 6-9 15-9z" />
          </g>
          <text x="36" y="71" textAnchor="middle" fontSize="34" fontFamily="Liberation Sans" fill="#fff" stroke="#bdbdbd" strokeWidth="1">du</text>
        </svg>
        <span className={`text-[42px] leading-[54px] font-black [font-family:'Noto_Sans_CJK_SC',sans-serif] ${glow}`}>经验</span>
      </div>
      <div className={`h-9 text-[29px] leading-9 ${glow}`}>jingyan.baidu.com</div>
    </div>
  );
}

export default function App() {
  return (
    <div className="relative flex h-screen flex-col overflow-hidden bg-[#217346] text-xs [font-family:'Open_Sans','Noto_Sans_CJK_SC',sans-serif]">
      <TitleBar />
      <Tabs />
      <Ribbon />
      <FormulaBar />
      <Sheet />
      <SheetTabs />
      <StatusBar />
      <Taskbar />
      <Watermark />
      <MiniBar />
      <ContextMenu />
      <div className="pointer-events-none absolute top-[254px] left-[117px] h-[71px] w-[272px] border border-[#f03030]" />
      <div className="pointer-events-none absolute top-[340px] left-[332px] h-[25px] w-[166px] border border-[#f03030]" />
    </div>
  );
}
